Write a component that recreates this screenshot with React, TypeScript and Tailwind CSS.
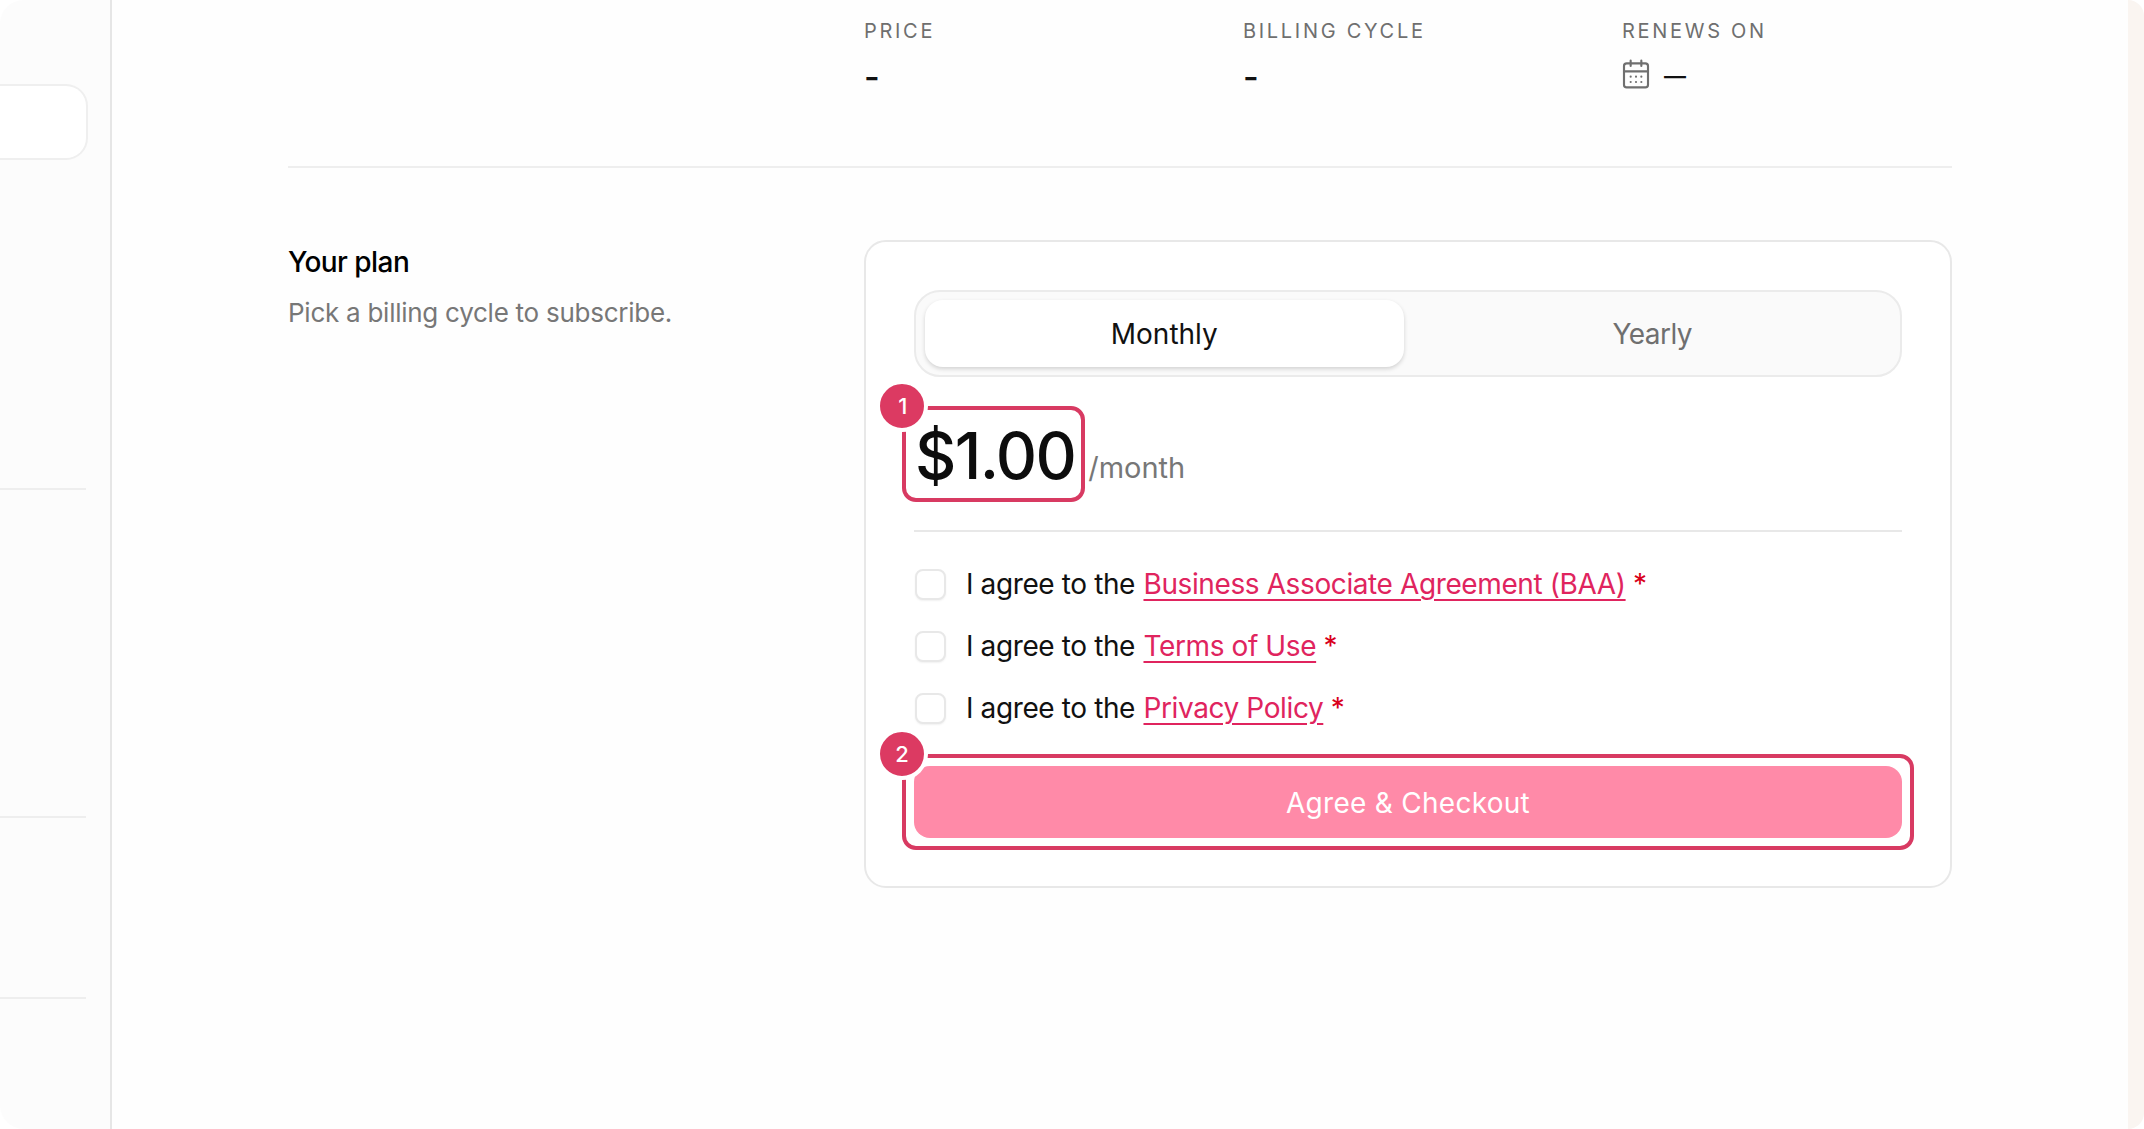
import { CalendarDays } from "lucide-react";

function Badge({ n }: { n: number }) {
  return (
    <span className="absolute -left-[26px] -top-[26px] flex h-[52px] w-[52px] items-center justify-center rounded-full border-[4px] border-white bg-[#dc3a62] text-[22px] font-medium text-white">
      {n}
    </span>
  );
}

function Stat({ label, children }: { label: string; children: React.ReactNode }) {
  return (
    <div className="w-[379px] shrink-0">
      <div className="text-[20px] leading-[30px] tracking-[0.135em] text-[#6f6f6f]">{label}</div>
      <div className="mt-[15px] flex h-[30px] items-center text-[#111]">{children}</div>
    </div>
  );
}

function Agreement({ link }: { link: string }) {
  return (
    <label className="flex h-[32px] items-center gap-[20px] pl-px text-[28px] tracking-[-0.014em] text-[#111]">
      <span className="h-[31px] w-[31px] rounded-[8px] border-2 border-[#e8e8e8] bg-white shadow-[0_1px_2px_rgba(0,0,0,0.06)]" />
      <span className="whitespace-nowrap">
        I agree to the{" "}
        <a className="ml-px text-[#e0245e] underline underline-offset-[5px]">{link}</a>{" "}
        <span className="text-[#d9001b]">*</span>
      </span>
    </label>
  );
}

export default function App() {
  return (
    <div className="flex h-screen w-screen overflow-hidden bg-white font-['Inter',sans-serif]">
      <aside className="w-[112px] shrink-0 rounded-l-[24px] border-r-2 border-[#e6e6e6] bg-[#fcfcfc]">
        <div className="mt-[84px] h-[76px] w-[88px] rounded-r-[22px] border-2 border-l-0 border-[#efefef] bg-white" />
        <div className="mt-[328px] h-[2px] w-[86px] bg-[#eeeeee]" />
        <div className="mt-[326px] h-[2px] w-[86px] bg-[#eeeeee]" />
        <div className="mt-[179px] h-[2px] w-[86px] bg-[#eeeeee]" />
      </aside>

      <main className="min-w-0 flex-1 bg-[#fefefe] px-[176px] pt-[16px]">
        <div className="flex border-b-2 border-[#eeeeee] pb-[75px] pl-[576px]">
          <Stat label="PRICE"><span className="text-[34px] font-medium">-</span></Stat>
          <Stat label="BILLING CYCLE"><span className="text-[34px] font-medium">-</span></Stat>
          <Stat label="RENEWS ON">
            <CalendarDays className="-ml-[2px] -mt-[5px] h-[32px] w-[32px] text-[#6f6f6f]" strokeWidth={1.6} />
            <span className="ml-[12px] text-[22px] font-semibold">—</span>
          </Stat>
        </div>

        <section className="mt-[72px] flex">
          <div className="w-[576px] shrink-0">
            <h2 className="mt-[4px] text-[28px] font-medium leading-[36px] tracking-[-0.02em] text-black">Your plan</h2>
            <p className="mt-[15px] text-[26px] leading-[36px] tracking-[-0.01em] text-[#777]">Pick a billing cycle to subscribe.</p>
          </div>

          <div className="h-[648px] flex-1 rounded-[22px] border-2 border-[#e8e8e8] bg-white px-[48px] pt-[48px]">
            <div className="grid h-[87px] grid-cols-2 gap-[8px] rounded-[26px] border-2 border-[#ebebeb] bg-[#fafafa] p-[8px] pl-[9px]">
              <button className="mr-px rounded-[18px] bg-white text-[28px] text-[#111] shadow-[0_2px_4px_rgba(0,0,0,0.16)]">Monthly</button>
              <button className="rounded-[18px] text-[28px] tracking-[-0.02em] text-[#6f6f6f]">Yearly</button>
            </div>

            <div className="mt-[37px] flex h-[80px] items-start">
              <span className="relative ml-px text-[64px] font-medium leading-[84px] tracking-[-0.025em] text-[#0d0d0d]">
                $1.00
                <span className="absolute -left-[13px] -right-[10px] -bottom-[4px] -top-[8px] rounded-[14px] border-[4px] border-[#d83a62]" />
                <span className="absolute -left-[13px] -top-[8px]"><Badge n={1} /></span>
              </span>
              <span className="ml-[13px] self-end pb-[5px] text-[29px] text-[#777]">/month</span>
            </div>

            <div className="mt-[36px] h-[2px] bg-[#e8e8e8]" />

            <div className="mt-[36px] flex flex-col gap-[30px]">
              <Agreement link="Business Associate Agreement (BAA)" />
              <Agreement link="Terms of Use" />
              <Agreement link="Privacy Policy" />
            </div>

            <div className="relative mt-[42px]">
              <button className="h-[72px] w-full rounded-[16px] bg-[#ff8aa8] pt-[2px] text-[28px] tracking-[0.01em] text-white">Agree &amp; Checkout</button>
              <span className="absolute -inset-x-[12px] -bottom-[12px] -top-[12px] rounded-[14px] border-[4px] border-[#d83a62]" />
              <span className="absolute -left-[12px] -top-[12px]"><Badge n={2} /></span>
            </div>
          </div>
        </section>
      </main>

      <div className="w-[16px] shrink-0 rounded-r-[24px] bg-[#faf5f1]" />
    </div>
  );
}
